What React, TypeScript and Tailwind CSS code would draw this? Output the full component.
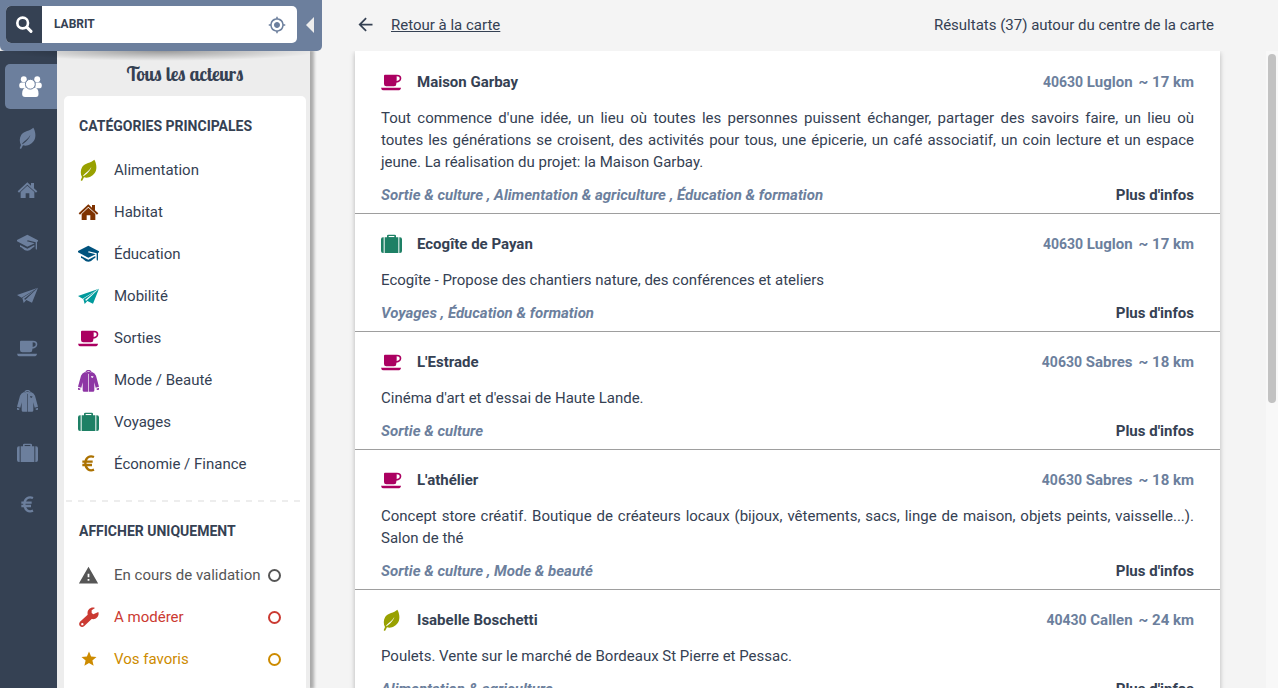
import React from "react";
import { MdArrowBack, MdGpsFixed, MdStar, MdWarning } from "react-icons/md";

type IconName = "leaf" | "home" | "cap" | "plane" | "cup" | "jacket" | "case" | "euro";

function CategoryIcon({ name, className = "" }: { name: IconName; className?: string }) {
  return (
    <svg viewBox="0 0 63 63" fill="currentColor" aria-hidden="true" className={`size-[21px] shrink-0 overflow-visible ${className}`}>
      {name === "leaf" && (
        <path
          fillRule="evenodd"
          d="M49 -1C55 9 58 25 52 36C45 48 32 56 18 52L12 63L8 61L12 51C7 43 7 29 13 20C21 8 39 9 49 -1ZM40 21C34 32 24 37 16 46L16 49C26 42 37 33 40 21Z"
        />
      )}
      {name === "home" && (
        <>
          <path d="M31 7L42 17V9H51V25L61 34L57 38L31 14L6 38L2 34Z" />
          <path d="M31 17L52 36V54H37V40H26V54H11V36Z" />
        </>
      )}
      {name === "cap" && (
        <>
          <path d="M31 5L63 22V25L60 27V46Q60 50 58 50Q56 50 56 46V28L32 22L30 25L53 31L31 41L0 25V21Z" />
          <path d="M9 36L31 47L52 36V42C44 44 42 53 31 53C20 53 18 44 9 42Z" />
        </>
      )}
      {name === "plane" && (
        <>
          <path d="M63 8L0 30L14 38Z" />
          <path d="M63 8L45 53L28 45L20 54L16 39L55 14L21 42L25 44Z" />
        </>
      )}
      {name === "cup" && (
        <>
          <path fillRule="evenodd" d="M12 8H48C57 8 61 12 61 19C61 27 55 31 46 32V36Q46 43 39 43H16Q9 43 9 36V11Q9 8 12 8ZM47 13V27C54 26 56 23 56 19C56 15 53 13 47 13Z" />
          <path d="M0 47H60Q59 55 51 55H8Q1 55 0 47Z" />
        </>
      )}
      {name === "jacket" && (
        <>
          <path d="M22 5C24 -2 39 -2 41 5L37 6C34 3 29 3 26 6Z" />
          <path fillRule="evenodd" d="M21 6L30 10V65H17Q14 65 14 61V37L10 53L0 50L9 17Q12 9 21 6ZM42 6L32 10V65H46Q49 65 49 61V37L53 53L63 50L54 17Q51 9 42 6ZM39 19H46V21L43 24L39 21Z" />
          <path d="M23 6H40L31 12Z" />
          <path d="M0 53L8 56L6 60L0 59ZM63 53L55 56L57 60L63 59Z" />
        </>
      )}
      {name === "case" && (
        <>
          <path fillRule="evenodd" d="M18 14V5Q18 2 22 2H41Q45 2 45 5V14ZM23 6V10H40V6Z" />
          <path d="M11 10H52V57H11ZM8 10V57H6Q0 57 0 51V16Q0 10 6 10ZM55 10V57H57Q63 57 63 51V16Q63 10 57 10Z" />
        </>
      )}
      {name === "euro" && (
        <path d="M48 9C34 3 22 12 22 28C22 44 34 53 48 47M13 23H44M13 33H42" fill="none" stroke="currentColor" strokeWidth="7" />
      )}
    </svg>
  );
}

function WrenchIcon() {
  return (
    <svg viewBox="0 0 60 60" fill="currentColor" aria-hidden="true" className="size-5">
      <path
        fillRule="evenodd"
        d="M48 3L38 10V18L43 22L58 15C62 28 51 39 38 36L16 57C7 65 -5 54 3 44L26 23C23 8 36 -2 48 3ZM10 48A3.500 3.500 0 1 0 10 55A3.500 3.500 0 1 0 10 48Z"
      />
    </svg>
  );
}

const categories: { icon: IconName; label: string; color: string }[] = [
  { icon: "leaf", label: "Alimentation", color: "text-[#98a100]" },
  { icon: "home", label: "Habitat", color: "text-[#7e3200]" },
  { icon: "cap", label: "Éducation", color: "text-[#00537e]" },
  { icon: "plane", label: "Mobilité", color: "text-[#009a9c]" },
  { icon: "cup", label: "Sorties", color: "text-[#ab0061]" },
  { icon: "jacket", label: "Mode / Beauté", color: "text-[#8e36a5]" },
  { icon: "case", label: "Voyages", color: "text-[#1e8065]" },
  { icon: "euro", label: "Économie / Finance", color: "text-[#ab7100]" },
];

const filters = [
  { id: "pending", label: "En cours de validation", color: "text-[#565656]", icon: <MdWarning size={21} /> },
  { id: "moderate", label: "A modérer", color: "text-[#cb3a32]", icon: <WrenchIcon /> },
  { id: "favorites", label: "Vos favoris", color: "text-[#cd8b00]", icon: <MdStar size={18} /> },
];

const results: { icon: IconName; color: string; name: string; zip: string; town: string; km: number; text: string; tags: string }[] = [
  {
    icon: "cup", color: "text-[#ab0061]", name: "Maison Garbay", zip: "40630", town: "Luglon", km: 17,
    text: "Tout commence d'une idée, un lieu où toutes les personnes puissent échanger, partager des savoirs faire, un lieu où toutes\u00a0les générations se croisent, des activités pour tous, une épicerie, un café associatif, un coin lecture et un espace jeune. La réalisation du projet: la Maison Garbay.",
    tags: "Sortie & culture , Alimentation & agriculture , Éducation & formation",
  },
  {
    icon: "case", color: "text-[#1e8065]", name: "Ecogîte de Payan", zip: "40630", town: "Luglon", km: 17,
    text: "Ecogîte - Propose des chantiers nature, des conférences et ateliers",
    tags: "Voyages , Éducation & formation",
  },
  {
    icon: "cup", color: "text-[#ab0061]", name: "L'Estrade", zip: "40630", town: "Sabres", km: 18,
    text: "Cinéma d'art et d'essai de Haute Lande.",
    tags: "Sortie & culture",
  },
  {
    icon: "cup", color: "text-[#ab0061]", name: "L'athélier", zip: "40630", town: "Sabres", km: 18,
    text: "Concept store créatif. Boutique de créateurs locaux (bijoux, vêtements, sacs, linge de maison, objets peints, vaisselle...). Salon de thé",
    tags: "Sortie & culture , Mode & beauté",
  },
  {
    icon: "leaf", color: "text-[#98a100]", name: "Isabelle Boschetti", zip: "40430", town: "Callen", km: 24,
    text: "Poulets. Vente sur le marché de Bordeaux St Pierre et Pessac.",
    tags: "Alimentation & agriculture",
  },
];

function SearchBar() {
  return (
    <header className="relative z-10 flex h-[51px] shrink-0 items-start rounded-b-[5px] bg-[#6c7f9d] pt-1.5 pl-1.5">
      <form className="flex h-[37px] w-[291px] overflow-hidden rounded-[5px] bg-white" onSubmit={(e) => e.preventDefault()}>
        <button type="submit" aria-label="Rechercher" className="flex w-9 items-center justify-center bg-[#354153] text-white">
          <svg viewBox="0 0 51 51" className="size-[17px]" fill="none" stroke="currentColor" strokeWidth="8">
            <circle cx="20" cy="21" r="16" />
            <path d="M33 34L45 46" strokeLinecap="round" strokeWidth="9" />
          </svg>
        </button>
        <input aria-label="Adresse" defaultValue="LABRIT" className="min-w-0 flex-1 bg-white pb-0.5 pl-3 text-[12px] font-bold text-[#354153] outline-none" />
        <button type="button" aria-label="Me localiser" className="flex w-10 items-center justify-center text-[#6c7f9d]">
          <MdGpsFixed size={18} />
        </button>
      </form>
      <button type="button" aria-label="Replier le menu" className="flex h-[37px] flex-1 items-center justify-center text-[#ededed]">
        <svg viewBox="0 0 8 16" className="h-4 w-2" fill="currentColor"><path d="M8 0V16L0 8Z" /></svg>
      </button>
      <div className="pointer-events-none absolute inset-x-0 top-full h-2.5 bg-[radial-gradient(ellipse_at_top,rgba(0,0,0,0.35),transparent_70%)]" />
    </header>
  );
}

function Rail() {
  return (
    <nav aria-label="Catégories" className="w-[57px] shrink-0 bg-[#354153] pt-[13px]">
      <button type="button" aria-label="Tous les acteurs" className="ml-[5px] flex h-[45px] w-[52px] items-center rounded-l-[5px] bg-[#6c7f9d] pl-3.5 text-white">
        <svg viewBox="0 0 69 64" className="h-[21px] w-[23px]" fill="currentColor">
          <circle cx="14" cy="10" r="9" />
          <circle cx="55" cy="10" r="9" />
          <path d="M0 30Q0 20 8 20H20V37H5Q0 37 0 30ZM69 30Q69 20 61 20H49V37H64Q69 37 69 30Z" />
          <path d="M9 54Q9 36 23 36H46Q59 36 59 54Q59 64 51 64H18Q9 64 9 54Z" />
          <circle cx="34" cy="25" r="15" stroke="#6c7f9d" strokeWidth="3" />
        </svg>
      </button>
      <div className="mt-[3px] flex h-[420px] flex-col">
        {categories.map((c) => (
          <button key={c.icon} type="button" aria-label={c.label} className="flex flex-1 items-center pl-[17px] text-[#6c7f9d]">
            <CategoryIcon name={c.icon} />
          </button>
        ))}
      </div>
    </nav>
  );
}

function FilterPanel() {
  return (
    <div className="flex min-w-0 flex-1 flex-col bg-[#ededed] pr-1 pl-[7px]">
      <h1 className="flex h-[45px] shrink-0 items-center justify-center font-['Lobster_Two','Lobster',cursive] text-[19px] font-bold">Tous les acteurs</h1>
      <div className="flex-1 rounded-t-[5px] bg-white pt-[19px]">
        <h2 className="pl-[15px] text-[14px] leading-[22px] font-bold">CATÉGORIES PRINCIPALES</h2>
        <ul className="mt-3">
          {categories.map((c) => (
            <li key={c.icon}>
              <button type="button" className="flex h-[42px] w-full items-center gap-[15px] pl-[14px] text-left">
                <CategoryIcon name={c.icon} className={c.color} />
                {c.label}
              </button>
            </li>
          ))}
        </ul>
        <div className="mt-[15px] mr-[5px] h-0.5 bg-[repeating-linear-gradient(90deg,transparent_0_2px,#ededed_2px_8px,transparent_8px_12px)]" />
        <h2 className="mt-[18px] pl-[15px] text-[14px] leading-[22px] font-bold">AFFICHER UNIQUEMENT</h2>
        <ul className="mt-3">
          {filters.map((f) => (
            <li key={f.id} className={`flex h-[42px] items-center pr-[25px] pl-[14px] ${f.color}`}>
              <label htmlFor={f.id} className="flex flex-1 items-center gap-[15px] whitespace-nowrap">
                <span className="flex w-[21px] justify-center">{f.icon}</span>
                {f.label}
              </label>
              <input id={f.id} type="checkbox" className="size-[13px] shrink-0 appearance-none rounded-full border-2 border-current checked:bg-current" />
            </li>
          ))}
        </ul>
      </div>
    </div>
  );
}

export default function App() {
  return (
    <div className="flex h-screen overflow-hidden bg-[#f4f4f4] font-['Roboto',sans-serif] text-[15px] leading-[22px] text-[#354153]">
      <aside className="flex w-[322px] shrink-0 flex-col">
        <SearchBar />
        <div className="mr-3 flex min-h-0 flex-1 shadow-[3px_0_3px_1px_rgba(0,0,0,0.3)]">
          <Rail />
          <FilterPanel />
        </div>
      </aside>
      <main className="flex min-w-0 flex-1 flex-col">
        <div className="flex h-[51px] shrink-0 items-center justify-between pr-16 pb-0.5 pl-[33px]">
          <a href="#carte" className="flex items-center gap-[15px]">
            <MdArrowBack size={21} />
            <span className="underline">Retour à la carte</span>
          </a>
          <span>Résultats (37) autour du centre de la carte</span>
        </div>
        <div className="flex min-h-0 flex-1 overflow-hidden pl-[33px]">
          <div className="mr-[46px] min-w-0 flex-1">
            <ul className="bg-white pt-px shadow-[0_2px_5px_rgba(0,0,0,0.26)]">
              {results.map((r) => (
                <li key={r.name} className="border-b border-[#9e9e9e] px-[26px] pt-[19px] pb-[7px]">
                  <div className="flex items-center">
                    <CategoryIcon name={r.icon} className={r.color} />
                    <h3 className="ml-[15px] flex-1 font-bold">{r.name}</h3>
                    <p className="flex gap-1.5 font-bold text-[#6c7f9d]">
                      <span><span className="text-[14px]">{r.zip}</span> {r.town}</span>
                      <span>~ {r.km} km</span>
                    </p>
                  </div>
                  <p className="mt-[14px] text-justify">{r.text}</p>
                  <div className="mt-[11px] flex justify-between font-bold">
                    <span className="text-[#6c7f9d] italic">{r.tags}</span>
                    <button type="button">Plus d'infos</button>
                  </div>
                </li>
              ))}
            </ul>
          </div>
          <div aria-hidden="true" className="w-3 shrink-0 bg-[#f8f8f8] px-0.5 pt-[3px]">
            <div className="h-[55%] rounded-full bg-[#c2c2c2]" />
          </div>
        </div>
      </main>
    </div>
  );
}
